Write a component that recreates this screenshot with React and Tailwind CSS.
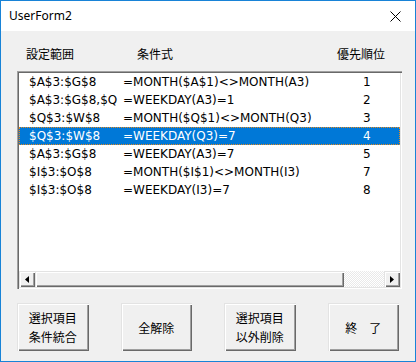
import React from "react";

const rows = [
  ["$A$3:$G$8", "=MONTH($A$1)<>MONTH(A3)", "1"],
  ["$A$3:$G$8,$Q", "=WEEKDAY(A3)=1", "2"],
  ["$Q$3:$W$8", "=MONTH($Q$1)<>MONTH(Q3)", "3"],
  ["$Q$3:$W$8", "=WEEKDAY(Q3)=7", "4"],
  ["$A$3:$G$8", "=WEEKDAY(A3)=7", "5"],
  ["$I$3:$O$8", "=MONTH($I$1)<>MONTH(I3)", "7"],
  ["$I$3:$O$8", "=WEEKDAY(I3)=7", "8"],
];

const raised =
  "shadow-[inset_1px_1px_0_#e3e3e3,inset_2px_2px_0_#ffffff,inset_-1px_-1px_0_#696969,inset_-2px_-2px_0_#a0a0a0]";

function Btn({ children }) {
  return (
    <div
      className={`w-[72px] h-[48px] bg-[#f0f0f0] ${raised} flex flex-col items-center justify-center leading-[19px] text-[12px] text-black`}
    >
      {children}
    </div>
  );
}

export default function App() {
  const font = { fontFamily: '"Noto Sans CJK JP", sans-serif' };
  const rowFont = { fontFamily: '"DejaVu Sans", "Noto Sans CJK JP", sans-serif' };
  return (
    <div
      className="w-[416px] h-[362px] border border-[#1883d7] flex flex-col bg-[#f0f0f0] overflow-hidden"
      style={font}
    >
      <div className="h-[30px] bg-white flex items-center justify-between pl-[8px] pr-[14px] shrink-0">
        <span
          className="text-[12px] text-black"
          style={{ fontFamily: '"Noto Sans", sans-serif' }}
        >
          UserForm2
        </span>
        <svg width="11" height="11" viewBox="0 0 11 11">
          <path d="M0.5 0.5L10.5 10.5M10.5 0.5L0.5 10.5" stroke="#000" strokeWidth="1" />
        </svg>
      </div>
      <div className="flex-1 flex flex-col px-[16px]">
        <div className="h-[40px] flex items-end pb-[10px] text-[12px] text-black leading-[14px]">
          <span className="w-[120px] pl-[9px]">設定範囲</span>
          <span className="w-[200px]">条件式</span>
          <span>優先順位</span>
        </div>
        <div className="w-[385px] h-[218px] bg-white p-[2px] flex flex-col shadow-[inset_1px_1px_0_#a0a0a0,inset_2px_2px_0_#696969,inset_-1px_-1px_0_#ffffff,inset_-2px_-2px_0_#e3e3e3]">
          <div className="flex-1 flex flex-col" style={rowFont}>
            {rows.map((r, i) => {
              const sel = i === 3;
              return (
                <div
                  key={i}
                  className={`h-[18px] flex items-center text-[12px] leading-[18px] ${
                    sel
                      ? "bg-[#0078d7] text-white border border-dotted border-[#e58a1f]"
                      : "text-black border border-transparent"
                  }`}
                >
                  <span className="w-[103px] pl-[9px] whitespace-nowrap overflow-hidden">{r[0]}</span>
                  <span className="w-[240px] whitespace-nowrap">{r[1]}</span>
                  <span>{r[2]}</span>
                </div>
              );
            })}
          </div>
          <div className="h-[16px] flex shrink-0">
            <div className={`w-[16px] h-[16px] bg-[#f0f0f0] ${raised} flex items-center justify-center`}>
              <svg width="4" height="7" viewBox="0 0 4 7">
                <path d="M4 0L0 3.5L4 7Z" fill="#000" />
              </svg>
            </div>
            <div className={`w-[309px] h-[16px] bg-[#f0f0f0] ${raised}`} />
            <div className="flex-1 h-[16px] bg-[repeating-conic-gradient(#ffffff_0_25%,#e9e9e9_0_50%)] bg-[length:2px_2px]" />
            <div className={`w-[16px] h-[16px] bg-[#f0f0f0] ${raised} flex items-center justify-center`}>
              <svg width="4" height="7" viewBox="0 0 4 7">
                <path d="M0 0L4 3.5L0 7Z" fill="#000" />
              </svg>
            </div>
          </div>
        </div>
        <div className="flex gap-[32px] mt-[14px]">
          <Btn>
            <span>選択項目</span>
            <span>条件統合</span>
          </Btn>
          <Btn>
            <span>全解除</span>
          </Btn>
          <Btn>
            <span>選択項目</span>
            <span>以外削除</span>
          </Btn>
          <Btn>
            <span>終　了</span>
          </Btn>
        </div>
      </div>
    </div>
  );
}
